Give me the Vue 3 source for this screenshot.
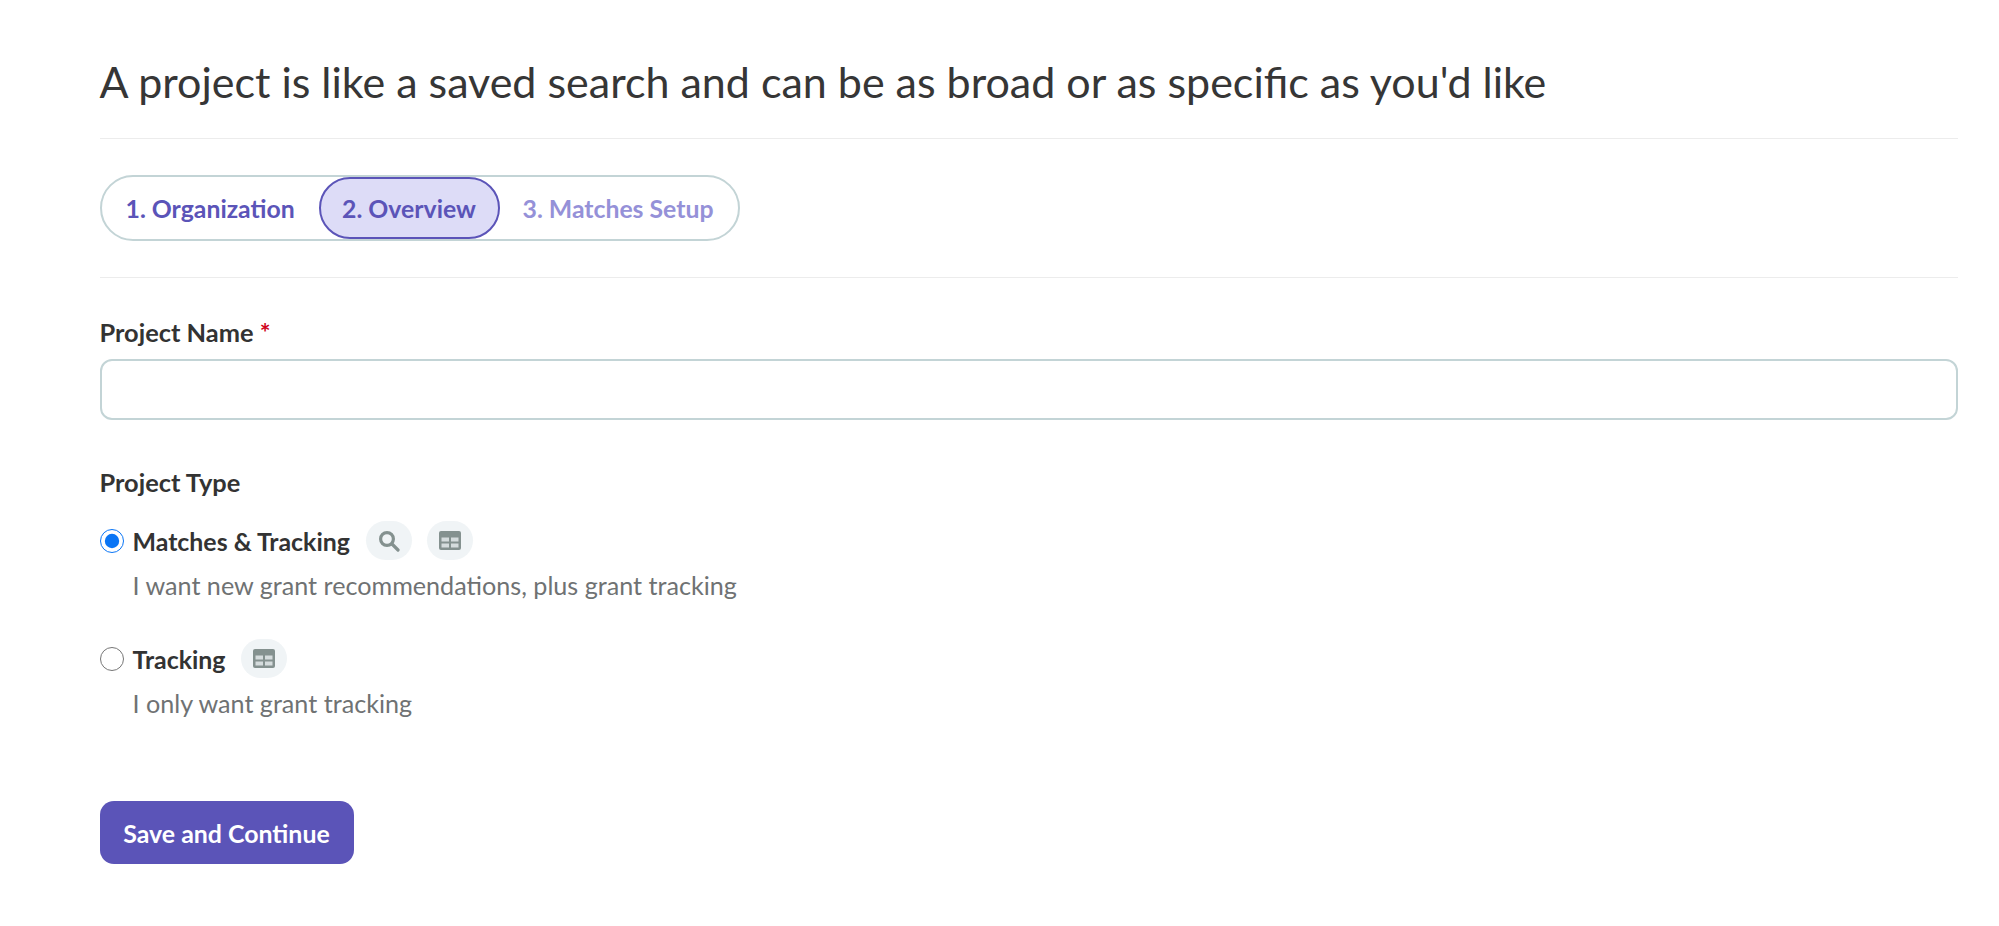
<template>
  <div class="page">
    <h1 class="title">A project is like a saved search and can be as broad or as specific as you'd like</h1>
    <nav class="steps-row">
      <div class="steps">
        <span class="step done">1. Organization</span>
        <span class="step active">2. Overview</span>
        <span class="step todo">3. Matches Setup</span>
      </div>
    </nav>
    <form class="form" @submit.prevent>
      <label class="label name-label" for="project-name">Project Name <span class="req">*</span></label>
      <input id="project-name" class="input" type="text" />
      <div class="label type-label">Project Type</div>
      <div v-for="opt in options" :key="opt.id" class="option">
        <div class="option-head">
          <input :id="opt.id" v-model="projectType" class="radio" type="radio" :value="opt.id" />
          <label class="option-name" :for="opt.id">{{ opt.name }}</label>
          <span v-if="opt.search" class="chip">
            <svg width="22" height="22" viewBox="0 0 22 22" fill="none" stroke="#84918f" stroke-width="3.2" stroke-linecap="round">
              <circle cx="9" cy="9" r="6.4" />
              <path d="M14 14 20 20" />
            </svg>
          </span>
          <span class="chip">
            <svg width="22" height="19" viewBox="0 0 22 19">
              <rect width="22" height="19" rx="2" fill="#84918f" />
              <path fill="#d5dcdd" d="M2.500 6.500h7.500v4h-7.500ZM12 6.500h7.500v4H12ZM2.500 12.500h7.500v4h-7.500ZM12 12.500h7.500v4H12Z" />
            </svg>
          </span>
        </div>
        <p class="option-desc">{{ opt.desc }}</p>
      </div>
      <button class="save" type="submit">Save and Continue</button>
    </form>
  </div>
</template>

<script setup>
import { ref } from 'vue'

const projectType = ref('both')
const options = [
  { id: 'both', name: 'Matches & Tracking', desc: 'I want new grant recommendations, plus grant tracking', search: true },
  { id: 'tracking', name: 'Tracking', desc: 'I only want grant tracking', search: false },
]
</script>

<style>
html, body {
  margin: 0;
  background: #fff;
}
</style>

<style scoped>
.page {
  box-sizing: border-box;
  width: 1999px;
  height: 926px;
  overflow: hidden;
  padding: 0 41px 0 99.5px;
  font-family: Lato, "Open Sans", sans-serif;
  color: #333;
}
.title {
  margin: 0;
  height: 138px;
  line-height: 164px;
  font-size: 43px;
  font-weight: 400;
  color: #363636;
  white-space: nowrap;
  border-bottom: 1px solid #ececec;
}
.steps-row {
  height: 139px;
  box-sizing: border-box;
  padding-top: 36px;
  border-bottom: 1px solid #ececec;
}
.steps {
  display: inline-flex;
  align-items: center;
  box-sizing: border-box;
  height: 66px;
  width: 640px;
  padding-left: 24px;
  border: 2px solid #c3d4d6;
  border-radius: 33px;
}
.step {
  font-size: 24.800px;
  font-weight: 700;
  white-space: nowrap;
}
.done {
  color: #5b54b8;
  width: 193px;
}
.active {
  display: flex;
  align-items: center;
  justify-content: center;
  box-sizing: border-box;
  width: 181px;
  height: 62px;
  color: #5b54b8;
  background: #dddcf7;
  border: 2px solid #5b54b8;
  border-radius: 31px;
}
.todo {
  color: #9591d8;
  margin-left: 23px;
}
.form {
  display: block;
}
.label {
  font-size: 25.400px;
  font-weight: 700;
  color: #333;
}
.name-label {
  display: block;
  margin-top: 40px;
  line-height: 29px;
}
.req {
  color: #d0021b;
}
.input {
  display: block;
  box-sizing: border-box;
  width: 100%;
  height: 61px;
  margin-top: 12px;
  border: 2px solid #c3d4d6;
  border-radius: 12px;
  outline: none;
  background: #fff;
}
.type-label {
  margin-top: 47px;
  line-height: 30px;
}
.option {
  margin-bottom: 39px;
}
.type-label + .option {
  margin-top: 24px;
}
.option-head {
  display: flex;
  align-items: center;
  height: 39px;
}
.radio {
  width: 24px;
  height: 24px;
  margin: 0 9px 0 0;
  accent-color: #0a75f5;
  flex: none;
}
.option-name {
  font-size: 24.900px;
  font-weight: 700;
  color: #333;
  margin-right: 16px;
}
.chip {
  display: flex;
  align-items: center;
  justify-content: center;
  width: 46px;
  height: 39px;
  border-radius: 20px;
  background: #f0f4f6;
  margin-right: 15px;
}
.option-desc {
  margin: 10px 0 0 33px;
  font-size: 25.150px;
  line-height: 30px;
  color: #6f7273;
}
.save {
  display: block;
  margin-top: 83px;
  width: 254px;
  height: 63px;
  border: none;
  border-radius: 14px;
  background: #5b54b8;
  color: #fff;
  font-family: inherit;
  font-size: 24.900px;
  font-weight: 700;
  padding: 0;
}
</style>
